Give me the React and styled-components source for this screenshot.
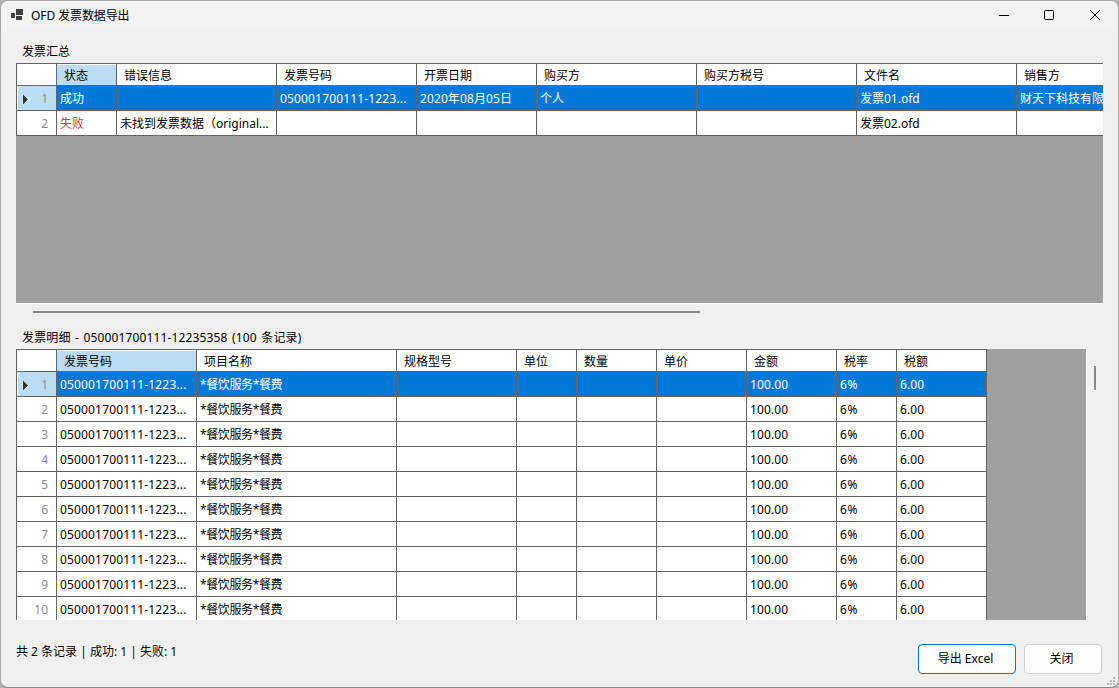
import React from 'react';
import styled, { createGlobalStyle } from 'styled-components';

const GlobalStyle = createGlobalStyle`
  * {
    box-sizing: border-box;
  }

  body {
    margin: 0;
    overflow: hidden;
    background: #b4b2b4;
    font-family: 'Noto Sans', 'Noto Sans CJK SC', sans-serif;
    font-size: 12px;
    line-height: 16px;
    color: #000;
  }
`;

const Window = styled.div`
  width: 1119px;
  height: 688px;
  border: 1px solid #aaa8aa;
  border-bottom-color: #8a8a8a;
  border-radius: 8px;
  background: #f0f0f0;
  display: flex;
  flex-direction: column;
  overflow: hidden;
`;

const TitleBar = styled.header`
  flex: none;
  height: 30px;
  padding-left: 10px;
  background: #f3f3f3;
  display: flex;
  align-items: center;

  h1 {
    flex: 1;
    margin: 0 0 0 8px;
    font-size: 12px;
    font-weight: normal;
    letter-spacing: -0.1px;
  }
`;

const AppIcon = styled.svg`
  margin-bottom: 2px;
`;

const Caption = styled.div`
  display: flex;
  gap: 25px;
  padding: 0 13px 2px 0;
`;

const Content = styled.main`
  flex: 1;
  display: flex;
  flex-direction: column;
  padding-left: 15px;
`;

const Label = styled.div`
  height: ${props => props.$height}px;
  padding: ${props => props.$top}px 0 0 6px;
  letter-spacing: ${props => props.$spacing || 0}px;
  word-spacing: 1.2px;
  white-space: pre;
`;

const GridView = styled.div`
  width: ${props => props.$width}px;
  height: ${props => props.$height}px;
  flex: none;
  background: #a0a0a0;
  overflow: hidden;
`;

const Rows = styled.div`
  width: max-content;
  border-top: 1px solid #646464;
  border-left: 1px solid #646464;
`;

const Row = styled.div`
  display: grid;
  grid-template-columns: 40px ${props => props.$columns.map(w => `${w}px`).join(' ')};
  height: ${props => (props.$header ? 22 : 25)}px;
`;

const Cell = styled.div`
  padding: 5px 0 0 3px;
  border-right: 1px solid #646464;
  border-bottom: 1px solid #646464;
  background: ${props => (props.$selected ? '#0078d7' : '#fff')};
  color: ${props => (props.$selected ? '#fff' : props.$failed ? '#dc3545' : '#000')};
  letter-spacing: ${props => props.$spacing || 0}px;
  white-space: pre;
  overflow: hidden;
`;

const HeaderCell = styled(Cell)`
  padding: 4px 0 0 7px;
  background: ${props => (props.$active ? '#bcdcf4' : '#fff')};
  color: #000;
  box-shadow: inset 0 1px #fff;
`;

const RowHeader = styled(Cell)`
  display: flex;
  justify-content: space-between;
  padding: 5px 8px 0 5px;
  background: ${props => (props.$selected ? '#bcdcf4' : '#fff')};
  color: #8c8c8c;
  box-shadow: inset 1px 0 #fff;

  svg {
    margin-top: 3px;
  }

  span {
    margin-left: auto;
  }
`;

const HScroll = styled.div`
  width: 1087px;
  height: 18px;
  border-top: 1px solid #fff;
  padding: 7px 0 0 17px;

  div {
    width: 667px;
    height: 2px;
    background: #868686;
  }
`;

const Detail = styled.div`
  display: flex;
`;

const VScroll = styled.div`
  width: 18px;
  border-left: 1px solid #fff;
  padding: 17px 0 0 7px;

  div {
    width: 2px;
    height: 24px;
    background: #868686;
  }
`;

const Footer = styled.footer`
  flex: 1;
  display: flex;
  gap: 8px;
  padding: 24px 0 0;
`;

const Status = styled.div`
  flex: 1;
  white-space: pre;
`;

const Button = styled.button`
  width: ${props => props.$width}px;
  height: 30px;
  padding: 0 3px 1px 0;
  border: 1px solid ${props => (props.$primary ? '#0078d4' : '#d0d0d0')};
  border-radius: 4px;
  background: #fdfdfd;
  color: #000;
  font: inherit;
`;

const Grip = styled.svg`
  align-self: flex-end;
  margin: 0 1px 0 -3px;
`;

const summaryColumns = [
  ['状态', 60],
  ['错误信息', 160],
  ['发票号码', 140],
  ['开票日期', 120],
  ['购买方', 160],
  ['购买方税号', 160],
  ['文件名', 160],
  ['销售方', 160],
];

const summaryRows = [
  ['成功', '', '050001700111-1223...', '2020年08月05日', '个人', '', '发票01.ofd', '财天下科技有限公司'],
  ['失败', '未找到发票数据（original...', '', '', '', '', '发票02.ofd', ''],
];

const detailColumns = [
  ['发票号码', 140],
  ['项目名称', 200],
  ['规格型号', 120],
  ['单位', 60],
  ['数量', 80],
  ['单价', 90],
  ['金额', 90],
  ['税率', 60],
  ['税额', 90],
];

const detailRows = Array.from({ length: 10 }, () => [
  '050001700111-1223...', '*餐饮服务*餐费', '', '', '', '', '100.00', '6%', '6.00',
]);

function spacingOf(text) {
  if (/^\d{12}/.test(text)) return 0.16;
  if (/^\*/.test(text)) return -0.38;
  if (/%$/.test(text)) return 0.6;
  if (/^[\d.]+$|^2020/.test(text)) return 0.1;
  return 0;
}

function Arrow() {
  return (
    <svg width="8" height="11" viewBox="0 0 8 11">
      <path d="M.5 0v11L7.5 5.5z" fill="#f4f9fd" />
      <path d="M1 .5v10L6 5.5z" fill="#303030" />
    </svg>
  );
}

function DataGrid({ columns, rows, width, height }) {
  const widths = columns.map(([, w]) => w);

  return (
    <GridView $width={width} $height={height}>
      <Rows>
        <Row $columns={widths} $header>
          <HeaderCell />
          {columns.map(([name], i) => (
            <HeaderCell key={name} $active={i === 0}>{name}</HeaderCell>
          ))}
        </Row>
        {rows.map((row, r) => (
          <Row key={r} $columns={widths}>
            <RowHeader $selected={r === 0}>
              {r === 0 && <Arrow />}
              <span>{r + 1}</span>
            </RowHeader>
            {row.map((text, c) => (
              <Cell key={c} $selected={r === 0} $failed={text === '失败'} $spacing={spacingOf(text)}>
                {text}
              </Cell>
            ))}
          </Row>
        ))}
      </Rows>
    </GridView>
  );
}

function App() {
  return (
    <>
      <GlobalStyle />
      <Window>
        <TitleBar>
          <AppIcon width="12" height="12" viewBox="0 0 12 12" fill="#404040" shapeRendering="crispEdges">
            <path d="M5 0h7v6H5zM0 4h4v5H0zM5 7h6v4H5z" />
          </AppIcon>
          <h1>OFD 发票数据导出</h1>
          <Caption>
            <svg width="20" height="20" viewBox="0 0 20 20">
              <path d="M4 10.5h10" stroke="#000" />
            </svg>
            <svg width="20" height="20" viewBox="0 0 20 20">
              <rect x="4.5" y="5.5" width="9" height="9" rx="1" fill="none" stroke="#000" />
            </svg>
            <svg width="20" height="20" viewBox="0 0 20 20">
              <path d="M5 5l10 10M15 5L5 15" stroke="#000" />
            </svg>
          </Caption>
        </TitleBar>
        <Content>
          <Label $height={32} $top={13}>发票汇总</Label>
          <DataGrid columns={summaryColumns} rows={summaryRows} width={1087} height={240} />
          <HScroll><div /></HScroll>
          <Label $height={28} $top={9} $spacing={0.14}>发票明细 - 050001700111-12235358 (100 条记录)</Label>
          <Detail>
            <DataGrid columns={detailColumns} rows={detailRows} width={1070} height={271} />
            <VScroll><div /></VScroll>
          </Detail>
          <Footer>
            <Status>共 2 条记录 | 成功: 1 | 失败: 1</Status>
            <Button $width={98} $primary>导出 Excel</Button>
            <Button $width={78}>关闭</Button>
            <Grip width="10" height="10" viewBox="0 0 10 10" fill="#bcbcbc" shapeRendering="crispEdges">
              <path d="M6 0h2v2H6zM3 3h2v2H3zM6 3h2v2H6zM0 6h2v2H0zM3 6h2v2H3zM6 6h2v2H6z" />
            </Grip>
          </Footer>
        </Content>
      </Window>
    </>
  );
}

export default App;
